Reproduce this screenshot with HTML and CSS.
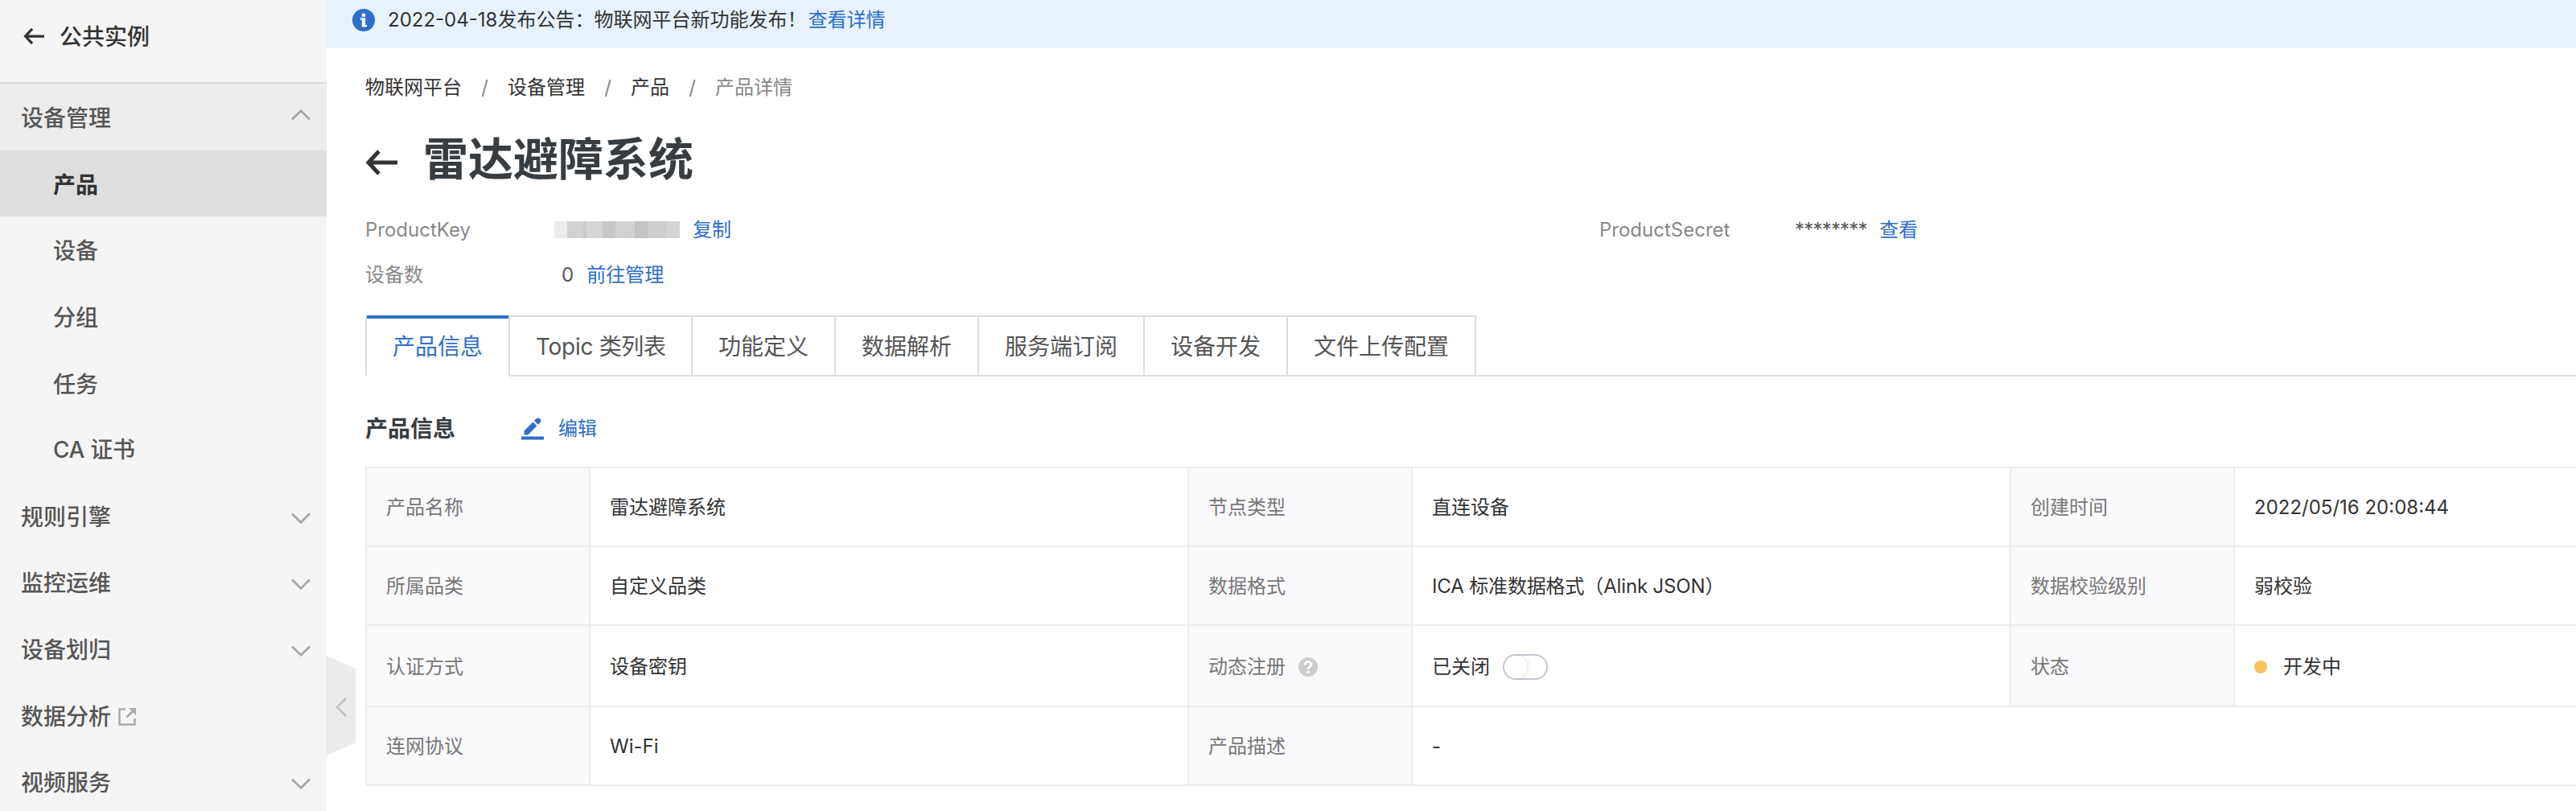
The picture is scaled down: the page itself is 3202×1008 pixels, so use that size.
FILE: index.html
```html
<!DOCTYPE html>
<html lang="zh-CN">
<head>
<meta charset="utf-8">
<title>产品详情</title>
<link rel="stylesheet" href="styles.css">
</head>
<body>
<div class="app">
  <nav class="sidebar">
    <div class="sidebar-head">
      <svg class="back-icon" viewBox="0 0 40 32"><path d="M17 2 4 16l13 14M4 16h36" fill="none" stroke="currentColor" stroke-width="5"/></svg>
      <span>公共实例</span>
    </div>
    <ul class="menu">
      <li class="menu-item open"><span>设备管理</span><svg class="chevron up" viewBox="0 0 24 14"><path d="M1 1.500 12 12.300 23 1.500"/></svg></li>
      <li class="menu-item sub active">产品</li>
      <li class="menu-item sub">设备</li>
      <li class="menu-item sub">分组</li>
      <li class="menu-item sub">任务</li>
      <li class="menu-item sub cert">CA 证书</li>
      <li class="menu-item"><span>规则引擎</span><svg class="chevron" viewBox="0 0 24 14"><path d="M1 1.500 12 12.300 23 1.500"/></svg></li>
      <li class="menu-item"><span>监控运维</span><svg class="chevron" viewBox="0 0 24 14"><path d="M1 1.500 12 12.300 23 1.500"/></svg></li>
      <li class="menu-item"><span>设备划归</span><svg class="chevron" viewBox="0 0 24 14"><path d="M1 1.500 12 12.300 23 1.500"/></svg></li>
      <li class="menu-item"><span>数据分析</span><svg class="external" viewBox="0 0 22 22"><path d="M9 1.500H1.500v19h19V13" fill="none" stroke="currentColor" stroke-width="2.600"/><path d="M10.500 11.500 18 4" fill="none" stroke="currentColor" stroke-width="2.600"/><path d="M13 0h9v9z" fill="currentColor"/></svg></li>
      <li class="menu-item"><span>视频服务</span><svg class="chevron" viewBox="0 0 24 14"><path d="M1 1.500 12 12.300 23 1.500"/></svg></li>
    </ul>
    <button class="collapse" aria-label="收起"><svg viewBox="0 0 14 24"><path d="M13 1 2 12l11 11" fill="none" stroke="#bfbfbf" stroke-width="2.500"/></svg></button>
  </nav>

  <main class="main">
    <div class="notice">
      <svg class="info-icon" viewBox="0 0 28 28"><circle cx="14" cy="14" r="14" fill="#2d6fc7"/><path d="M11.800 5.800h4.400v4h-4.400zM10 11.300h6.200v8.600h1.800v2.600h-6.200v-8.600H10z" fill="#fff"/></svg>
      <span>2022-04-18发布公告：物联网平台新功能发布！</span><a class="link">查看详情</a>
    </div>
    <div class="page">
      <div class="breadcrumb">
        <span>物联网平台</span><i>/</i><span>设备管理</span><i>/</i><span>产品</span><i>/</i><span class="current">产品详情</span>
      </div>
      <div class="title-row">
        <svg class="back-icon" viewBox="0 0 40 32"><path d="M17 2 4 16l13 14M4 16h36" fill="none" stroke="currentColor" stroke-width="5"/></svg>
        <h1>雷达避障系统</h1>
      </div>
      <div class="meta">
        <span class="meta-label">ProductKey</span>
        <span class="meta-value"><span class="mask"></span><a class="link">复制</a></span>
        <span class="meta-label">ProductSecret</span>
        <span class="meta-value secret"><span class="stars">********</span><a class="link">查看</a></span>
        <span class="meta-label">设备数</span>
        <span class="meta-value count"><span>0</span><a class="link">前往管理</a></span>
      </div>
      <div class="tabs">
        <div class="tab active">产品信息</div>
        <div class="tab topic">Topic 类列表</div>
        <div class="tab">功能定义</div>
        <div class="tab">数据解析</div>
        <div class="tab">服务端订阅</div>
        <div class="tab">设备开发</div>
        <div class="tab">文件上传配置</div>
        <div class="tab-rest"></div>
      </div>
      <div class="section-head">
        <h2>产品信息</h2>
        <a class="link edit"><svg viewBox="0 0 28 28"><path d="M0 23.500h28V27.500H0zM3.500 21.500v-5L14.500 5.500l4.800 4.800L8.500 21.500zM16 4l2.500-2.500q2.500-2 4.800 0t0 4.800L20.800 8.800z" fill="currentColor"/></svg>编辑</a>
      </div>
      <div class="info">
        <div class="label">产品名称</div><div class="value">雷达避障系统</div>
        <div class="label">节点类型</div><div class="value">直连设备</div>
        <div class="label">创建时间</div><div class="value">2022/05/16 20:08:44</div>

        <div class="label">所属品类</div><div class="value">自定义品类</div>
        <div class="label">数据格式</div><div class="value"><span class="format">ICA 标准数据格式（Alink JSON）</span></div>
        <div class="label">数据校验级别</div><div class="value">弱校验</div>

        <div class="label">认证方式</div><div class="value">设备密钥</div>
        <div class="label">动态注册<svg class="help" viewBox="0 0 24 24"><circle cx="12" cy="12" r="12" fill="#ccc"/><path d="M8.300 9.500q0-4 3.800-4t3.700 3.500q0 1.700-2 3-1.600 1-1.600 3" fill="none" stroke="#fff" stroke-width="2.600"/><circle cx="12.200" cy="18.300" r="1.700" fill="#fff"/></svg></div><div class="value">已关闭<span class="switch"></span></div>
        <div class="label">状态</div><div class="value"><span class="dot"></span>开发中</div>

        <div class="label">连网协议</div><div class="value">Wi-Fi</div>
        <div class="label">产品描述</div><div class="value wide">-</div>
      </div>
    </div>
  </main>
</div>
</body>
</html>
```

FILE: styles.css
```css
* { box-sizing: border-box; }

body {
  margin: 0;
  font-family: Inter, "Noto Sans CJK SC", sans-serif;
  font-size: 24px;
  line-height: 36px;
  color: #333;
  background: #fff;
}

h1, h2, ul { margin: 0; padding: 0; }
svg { display: block; flex: none; }
.link { color: #2d6fc7; }

.app {
  display: flex;
  width: 100%;
  height: 1008px;
  overflow: hidden;
}

/* Sidebar */
.sidebar {
  position: relative;
  flex: none;
  width: 406px;
  background: #f5f5f5;
  font-size: 28px;
  font-weight: 500;
  color: #555;
}
.sidebar-head {
  display: flex;
  align-items: center;
  gap: 19px;
  height: 104px;
  padding: 0 0 12px 29px;
  border-bottom: 2px solid #dadada;
  color: #333;
}
.sidebar-head span { padding-top: 1px; }
.sidebar-head .back-icon { width: 26px; height: 24px; }
.menu { list-style: none; }
.menu-item {
  display: flex;
  align-items: center;
  height: 82.600px;
  padding: 4px 20px 0 26px;
}
.menu-item.open { background: #ececec; }
.menu-item.sub { padding-left: 66px; }
.menu-item.cert { padding-top: 2px; letter-spacing: -.3px; }
.menu-item.active {
  background: #dedede;
  color: #333;
  font-weight: 600;
}
.chevron {
  width: 24px;
  height: 14px;
  margin: 2px 0 0 auto;
  fill: none;
  stroke: #a8a8a8;
  stroke-width: 2.800;
}
.chevron.up { margin-top: -8px; transform: scaleY(-1); }
.external { width: 22px; height: 22px; margin-left: 9px; color: #aaa; }
.collapse {
  position: absolute;
  left: 406px;
  top: 815px;
  width: 36px;
  height: 124px;
  padding: 0 0 0 11px;
  border: 0;
  background: #ebebeb;
  clip-path: polygon(0 0, 100% 13%, 100% 87%, 0 100%);
}
.collapse svg { width: 14px; height: 24px; margin-top: 3px; }

/* Page */
.main { flex: 1; min-width: 0; }
.notice {
  display: flex;
  align-items: center;
  height: 60px;
  padding: 0 0 11px 32px;
  background: #e7f2fd;
}
.notice span, .notice a { padding-top: 1px; }
.notice .link { margin-left: 2px; }
.info-icon { width: 28px; height: 28px; margin-right: 16px; }
.page { padding-left: 48px; }
.breadcrumb {
  display: flex;
  height: 36px;
  margin-top: 31px;
}
.breadcrumb i {
  width: 57px;
  font-style: normal;
  text-align: center;
  color: #888;
}
.breadcrumb .current { color: #888; }

.title-row {
  display: flex;
  align-items: center;
  gap: 32px;
  height: 80px;
  margin-top: 31px;
}
.title-row .back-icon { width: 40px; height: 32px; margin-top: 8px; }
h1 {
  font-size: 56px;
  line-height: 80px;
  font-weight: 600;
  color: #373d41;
}

.meta {
  display: grid;
  grid-template-columns: 235px 1299px 243px 1fr;
  grid-auto-rows: 56px;
  align-items: center;
  margin-top: 20px;
  color: #555;
}
.meta-label { color: #888; }
.meta-value { display: flex; align-items: center; }
.mask {
  width: 156px;
  height: 21px;
  margin: 0 16px 2px 0;
  background: linear-gradient(90deg, #ececec 0 16px, #d2d2d2 16px 36px, #cacaca 36px 40px, #d6d6d6 40px 60px, #c8c8c8 60px 76px, #d2d2d2 76px 100px, #c3c3c3 100px 116px, #cecece 116px 140px, #d4d4d4 140px);
}
.stars { width: 105px; letter-spacing: -.8px; }
.count { padding-left: 9px; }
.count .link { margin-left: 16px; }

.tabs {
  display: flex;
  height: 76px;
  margin-top: 22px;
  font-size: 28px;
  color: #555;
}
.tab {
  padding: 17px 32px 0;
  line-height: 40px;
  border: 2px solid #ddd;
  border-left: 0;
}
.tab.active {
  position: relative;
  width: 180px;
  color: #2d6fc7;
  border-left: 2px solid #ddd;
  border-bottom-color: transparent;
}
.tab.active::before {
  content: "";
  position: absolute;
  left: 0;
  right: 0;
  top: -2px;
  height: 4px;
  background: #2d6fc7;
}
.tab.topic { width: 227px; padding-right: 0; letter-spacing: -.3px; }
.tab-rest { flex: 1; border-bottom: 2px solid #ddd; }

.section-head {
  display: flex;
  align-items: center;
  height: 40px;
  margin: 45px 0 27px;
}
h2 {
  width: 194px;
  font-size: 28px;
  font-weight: 600;
  line-height: 40px;
  color: #373d41;
}
.edit { display: flex; align-items: center; gap: 18px; }
.edit svg { width: 28px; height: 28px; }

.info {
  display: grid;
  grid-template-columns: 278px 744px 278px 744px 278px 746px;
  grid-template-rows: 98px 98px 101px 98px;
  width: 3068px;
  border: solid #ebecec;
  border-width: 2px 0 0 2px;
}
.label, .value {
  display: flex;
  align-items: center;
  padding: 2px 24px 0;
  border: solid #ebecec;
  border-width: 0 2px 2px 0;
}
.label { background: #fafafc; color: #777; }
.value { color: #333; }
.format { letter-spacing: -.15px; }
.wide { grid-column: 4 / -1; }
.help { width: 24px; height: 24px; margin: 1px 0 0 16px; }
.switch {
  width: 56px;
  height: 32px;
  margin-left: 16px;
  border: 2px solid #c4c6cf;
  border-radius: 16px;
  background: #fff;
}
.switch::before {
  content: "";
  display: block;
  width: 28px;
  height: 28px;
  border-radius: 50%;
  background: #fff;
  box-shadow: 2px 0 4px rgba(0, 0, 0, .1);
}
.dot {
  width: 16px;
  height: 16px;
  margin-right: 20px;
  border-radius: 50%;
  background: #f6c25c;
}
```
